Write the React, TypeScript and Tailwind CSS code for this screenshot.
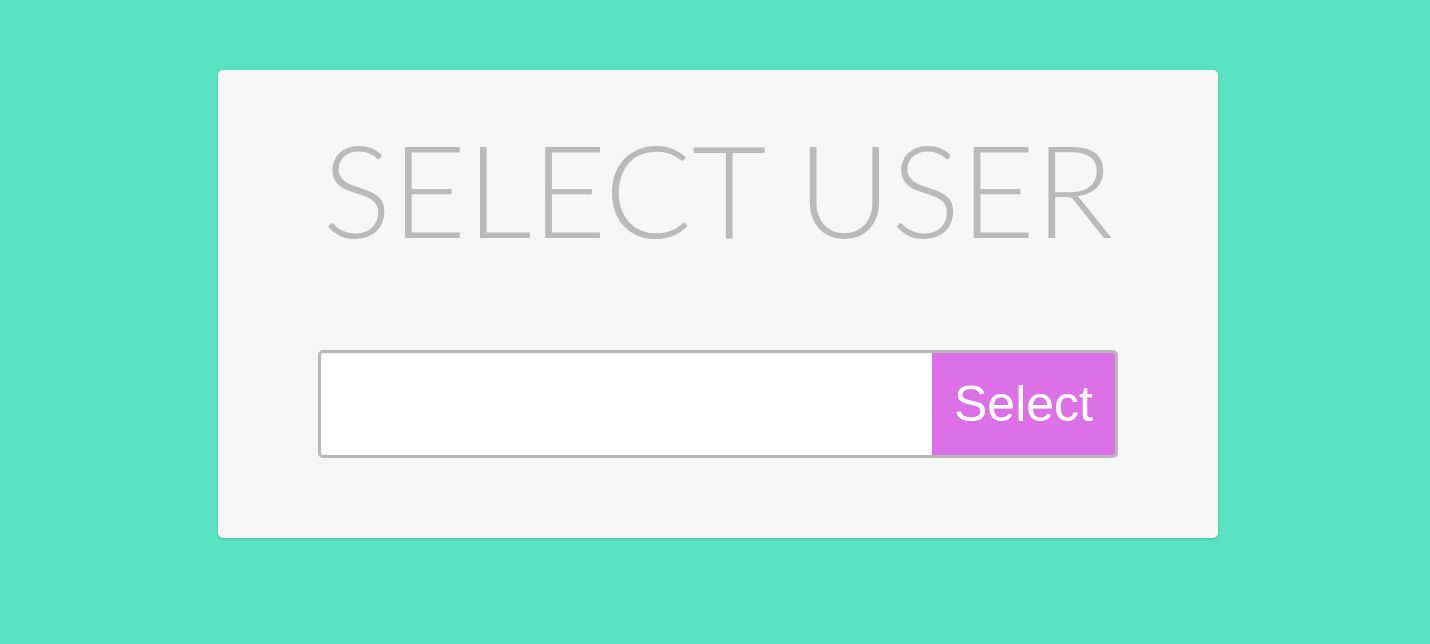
import React from "react";

export default function App() {
  return (
    <div className="min-h-[644px] w-full bg-[#5ae3c2] pl-[6px] pt-[70px]">
      <div className="mx-auto flex h-[468px] w-[1000px] flex-col items-center rounded-[5px] bg-[#f6f6f6] pt-[54px] shadow-[0_1px_3px_rgba(0,0,0,0.18)]">
        <h1
          className="text-[129px] font-light leading-none text-[#bababa]"
          style={{ fontFamily: "Lato, 'Open Sans', sans-serif" }}
        >
          SELECT USER
        </h1>
        <div className="mt-[97px] flex h-[108px] w-[800px] overflow-hidden rounded-[5px] border-[3px] border-[#b8b8b8] bg-white">
          <input
            className="h-full flex-1 bg-white outline-none shadow-[inset_0_1px_2px_rgba(0,0,0,0.08)]"
            aria-label="user"
          />
          <button
            className="flex h-full w-[183px] items-center justify-center bg-[#dc70e6] text-[50px] text-white"
            style={{ fontFamily: "'Liberation Sans', Arial, sans-serif" }}
          >
            Select
          </button>
        </div>
      </div>
    </div>
  );
}
